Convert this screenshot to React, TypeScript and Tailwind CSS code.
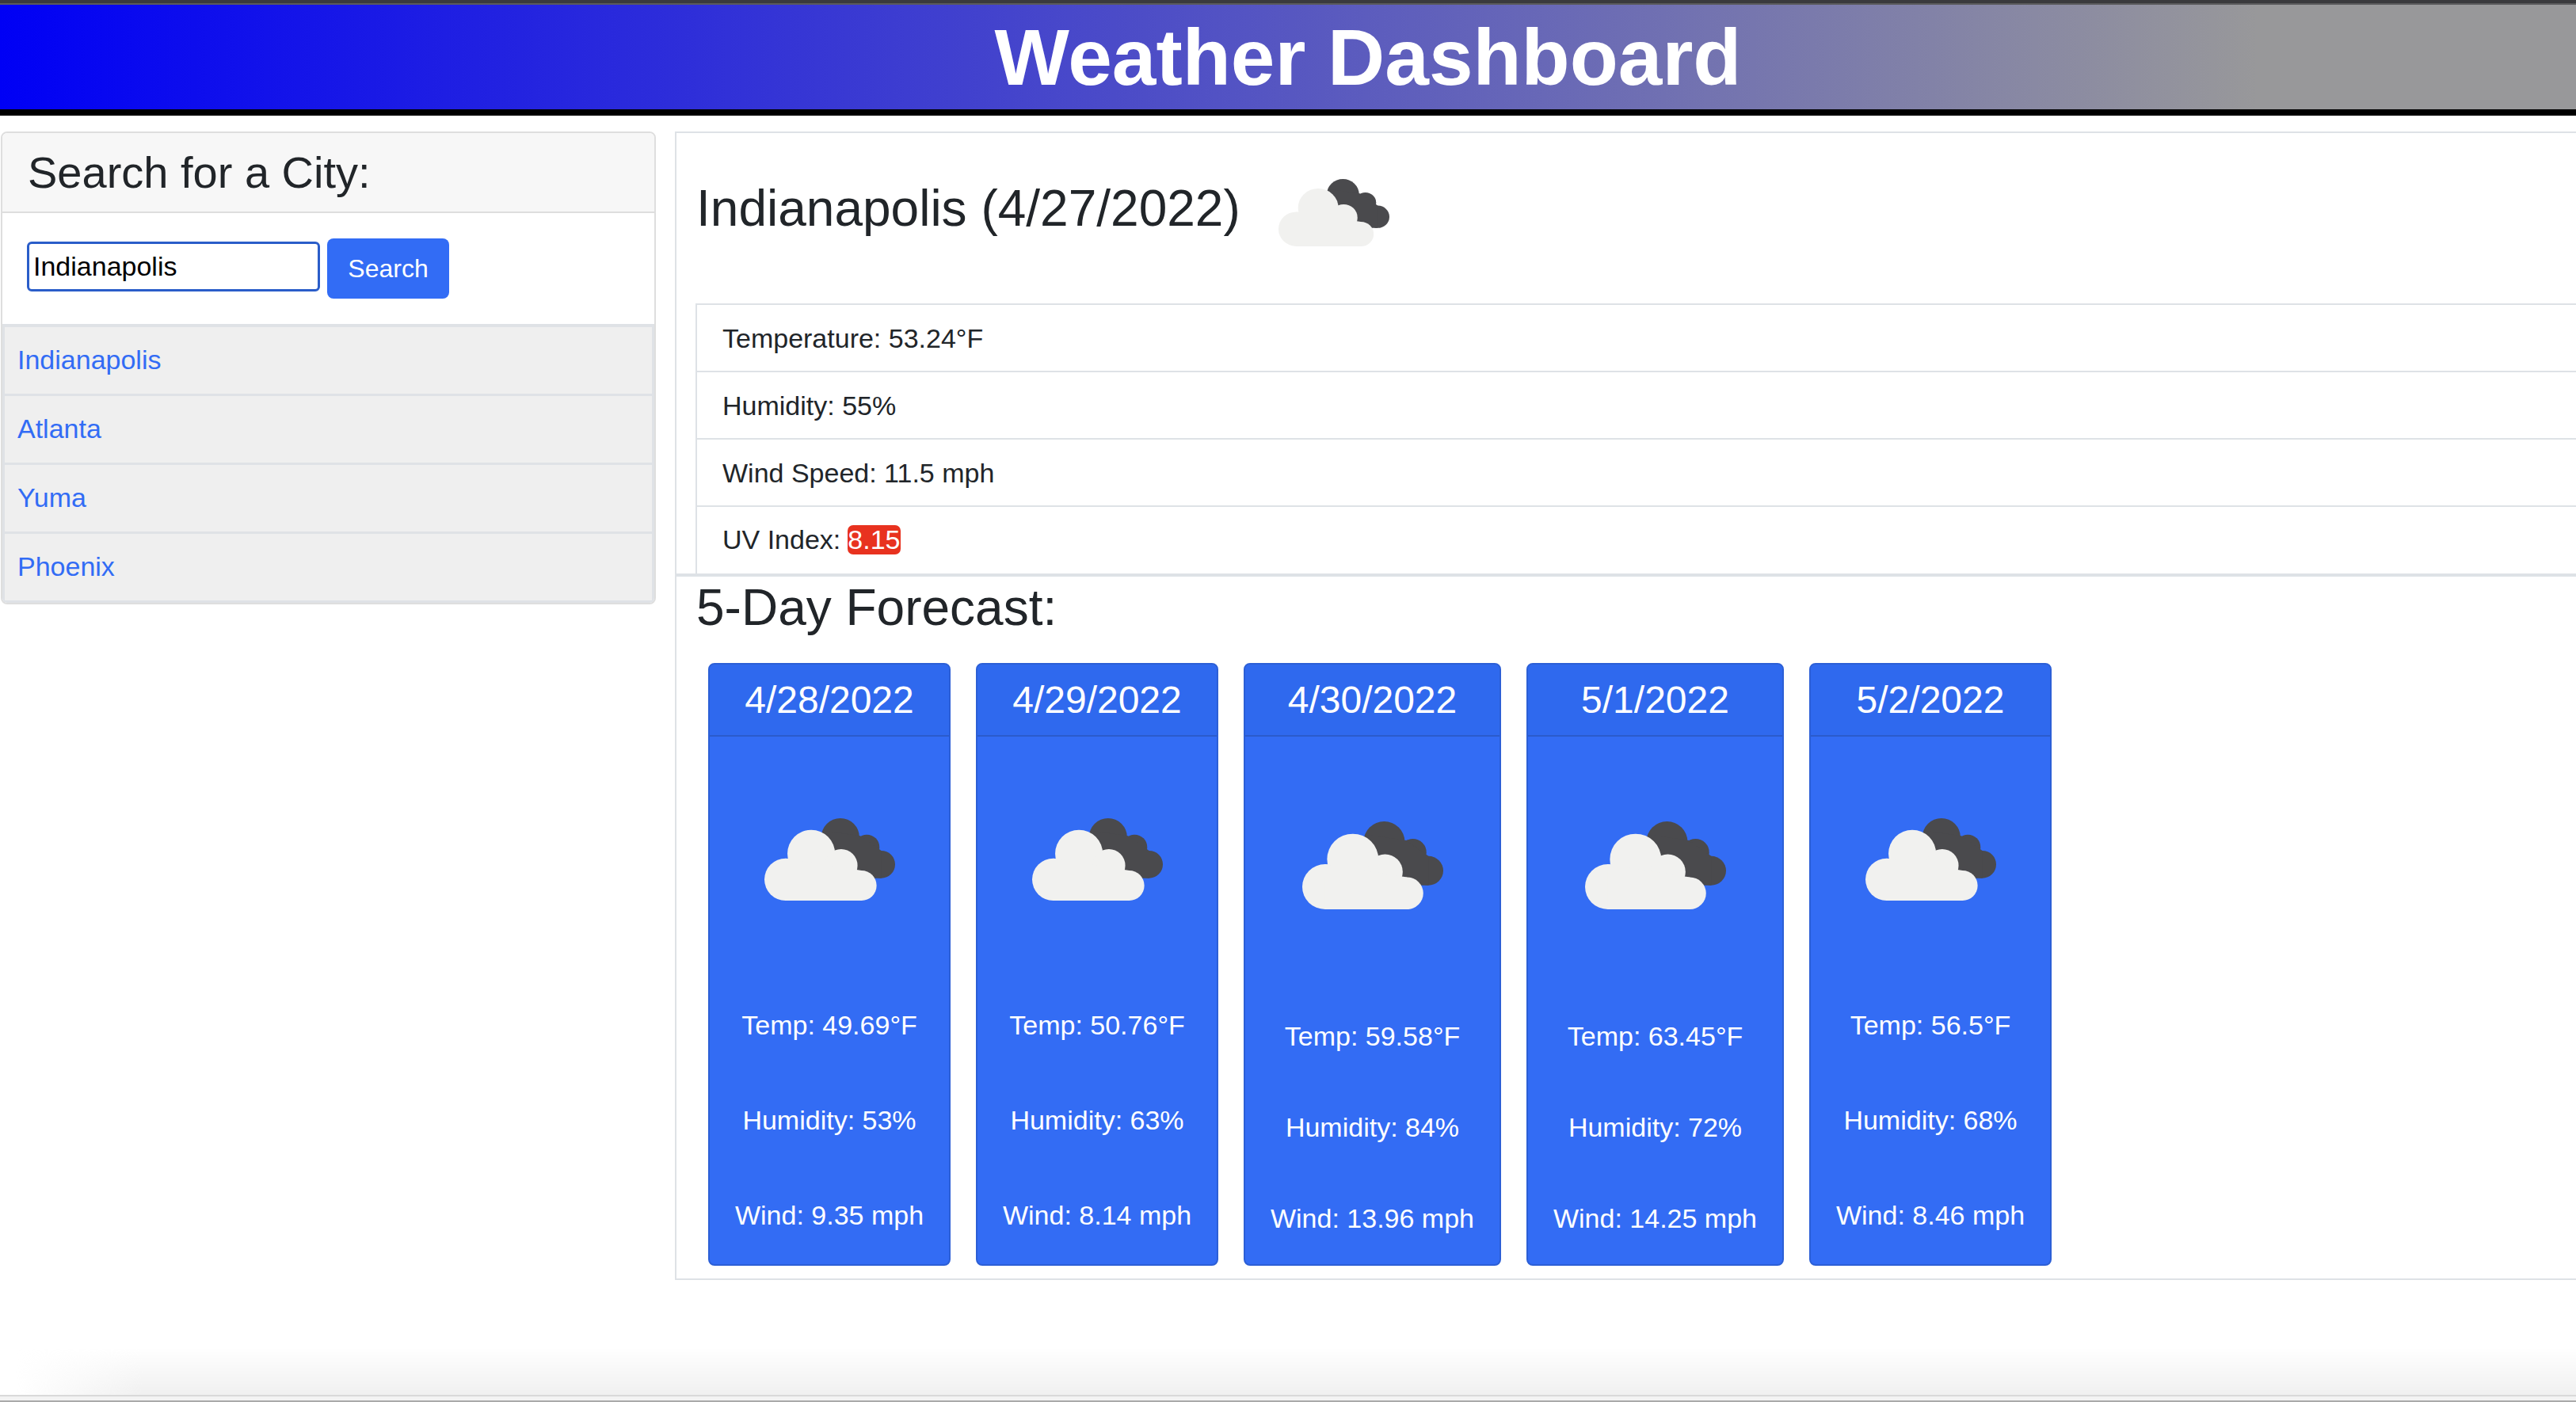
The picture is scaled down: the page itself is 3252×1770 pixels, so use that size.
const cities = ["Indianapolis", "Atlanta", "Yuma", "Phoenix"];

const current = ["Temperature: 53.24°F", "Humidity: 55%", "Wind Speed: 11.5 mph"];

const forecast = [
  { date: "4/28/2022", temp: "49.69", humidity: "53", wind: "9.35", wide: false },
  { date: "4/29/2022", temp: "50.76", humidity: "63", wind: "8.14", wide: false },
  { date: "4/30/2022", temp: "59.58", humidity: "84", wind: "13.96", wide: true },
  { date: "5/1/2022", temp: "63.45", humidity: "72", wind: "14.25", wide: true },
  { date: "5/2/2022", temp: "56.5", humidity: "68", wind: "8.46", wide: false },
];

function CloudIcon({ className }: { className: string }) {
  return (
    <svg viewBox="78 103 494 312" preserveAspectRatio="none" className={className}>
      <g fill="#4a4a4d">
        <circle cx="365" cy="175" r="72" />
        <circle cx="465" cy="213" r="48" />
        <circle cx="520" cy="278" r="52" />
        <path d="M300 150 L440 170 L520 226 L520 330 L440 330 L330 230 Z" />
      </g>
      <g fill="#f1f1ef">
        <circle cx="158" cy="335" r="80" />
        <circle cx="255" cy="237" r="90" />
        <circle cx="368" cy="282" r="62" />
        <circle cx="445" cy="358" r="57" />
        <path d="M158 255 L445 301 L445 415 L158 415 Z" />
      </g>
    </svg>
  );
}

function ForecastCard({ date, temp, humidity, wind, wide }: (typeof forecast)[number]) {
  return (
    <div
      className={`${wide ? "w-[325px]" : "w-[306px]"} h-[761px] shrink-0 overflow-hidden rounded-[8px] border-2 border-[#2c5fd6] bg-[#336cf4] text-center text-white`}
    >
      <div className="flex h-[91px] items-center justify-center border-b-2 border-[#2b5bcc] bg-[#2f69ee] text-[48px]">
        {date}
      </div>
      <div className="flex flex-col items-center">
        {wide ? (
          <CloudIcon className="mt-[107px] h-[111px] w-[178px]" />
        ) : (
          <CloudIcon className="mt-[103px] h-[104px] w-[165px]" />
        )}
        <div className={`${wide ? "mt-[135px] gap-[65px]" : "mt-[132px] gap-[70px]"} flex flex-col text-[34px] leading-[50px]`}>
          <p>Temp: {temp}°F</p>
          <p>Humidity: {humidity}%</p>
          <p>Wind: {wind} mph</p>
        </div>
      </div>
    </div>
  );
}

export default function App() {
  return (
    <div className="relative h-[1770px] w-[3252px] overflow-hidden bg-white text-[#212529] [font-family:'Liberation_Sans',Arial,sans-serif]">
      <div className="h-[6px] border-b-2 border-[#5a5a5c] bg-[#3a3a3d]" />
      <header className="flex h-[140px] items-center justify-center border-b-[8px] border-black bg-[linear-gradient(90deg,#0000f5_0,#98989a_2850px)] pl-[202px]">
        <h1 className="text-[100px] font-bold leading-none text-white">Weather Dashboard</h1>
      </header>

      <main className="mt-[20px] flex items-start pl-[1px]">
        <aside className="w-[827px] shrink-0 overflow-hidden rounded-[8px] border-2 border-[#dedede]">
          <div className="flex h-[101px] items-center border-b-2 border-[#dedede] bg-[#f7f7f7] pl-[32px] text-[56px]">
            Search for a City:
          </div>
          <div className="flex h-[140px] items-start gap-[9px] pl-[31px] pt-[32px]">
            <input
              readOnly
              value="Indianapolis"
              className="mt-[4px] h-[63px] w-[370px] rounded-[6px] border-[3px] border-[#2a5dc9] bg-white pl-[5px] text-[34px] text-black outline-none"
            />
            <button className="h-[76px] w-[154px] rounded-[8px] bg-[#326cf5] text-[32px] text-white">Search</button>
          </div>
          <ul className="border-x-[3px] border-t-[4px] border-[#dfe2e6]">
            {cities.map((city) => (
              <li
                key={city}
                className="flex h-[87px] items-center border-b-[3px] border-[#dfe2e6] bg-[#efefef] pb-[2px] pl-[16px] text-[34px] text-[#326cf5]"
              >
                {city}
              </li>
            ))}
          </ul>
        </aside>

        <section className="ml-[24px] flex-1 border-y-2 border-l-2 border-[#dee2e6] pb-[16px]">
          <div className="h-[215px] pl-[25px] pt-[58px]">
            <div className="flex items-start">
              <h2 className="mt-[5px] text-[64px] leading-[64px]">Indianapolis (4/27/2022)</h2>
              <CloudIcon className="ml-[48px] h-[85px] w-[140px]" />
            </div>
          </div>
          <ul className="border-b-[4px] border-[#dee2e6] pl-[24px]">
            {current.map((row) => (
              <li key={row} className="flex h-[85px] items-center border-l-2 border-t-2 border-[#dee2e6] pl-[32px] pt-[2px] text-[34px]">
                {row}
              </li>
            ))}
            <li className="flex h-[86px] items-center border-l-2 border-t-2 border-[#dee2e6] pb-[2px] pl-[32px] text-[34px]">
              UV Index:
              <span className="ml-[9px] rounded-[7px] bg-[#e8321f] leading-[37px] text-white">8.15</span>
            </li>
          </ul>
          <h2 className="mt-[7px] pl-[25px] text-[64px] leading-[64px]">5-Day Forecast:</h2>
          <div className="mt-[38px] flex gap-[32px] pl-[40px]">
            {forecast.map((day) => (
              <ForecastCard key={day.date} {...day} />
            ))}
          </div>
        </section>
      </main>

      {/* browser chrome edge at the bottom of the capture */}
      <div className="pointer-events-none absolute inset-x-0 bottom-0">
        <div className="h-[60px] bg-gradient-to-t from-[#f0f0f0] to-transparent [mask-image:linear-gradient(90deg,transparent_20px,black_180px)]" />
        <div className="h-[9px] border-y-2 border-t-[#d9d9d9] border-b-[#aaaaaa] bg-[#f3f3f3]" />
      </div>
    </div>
  );
}
